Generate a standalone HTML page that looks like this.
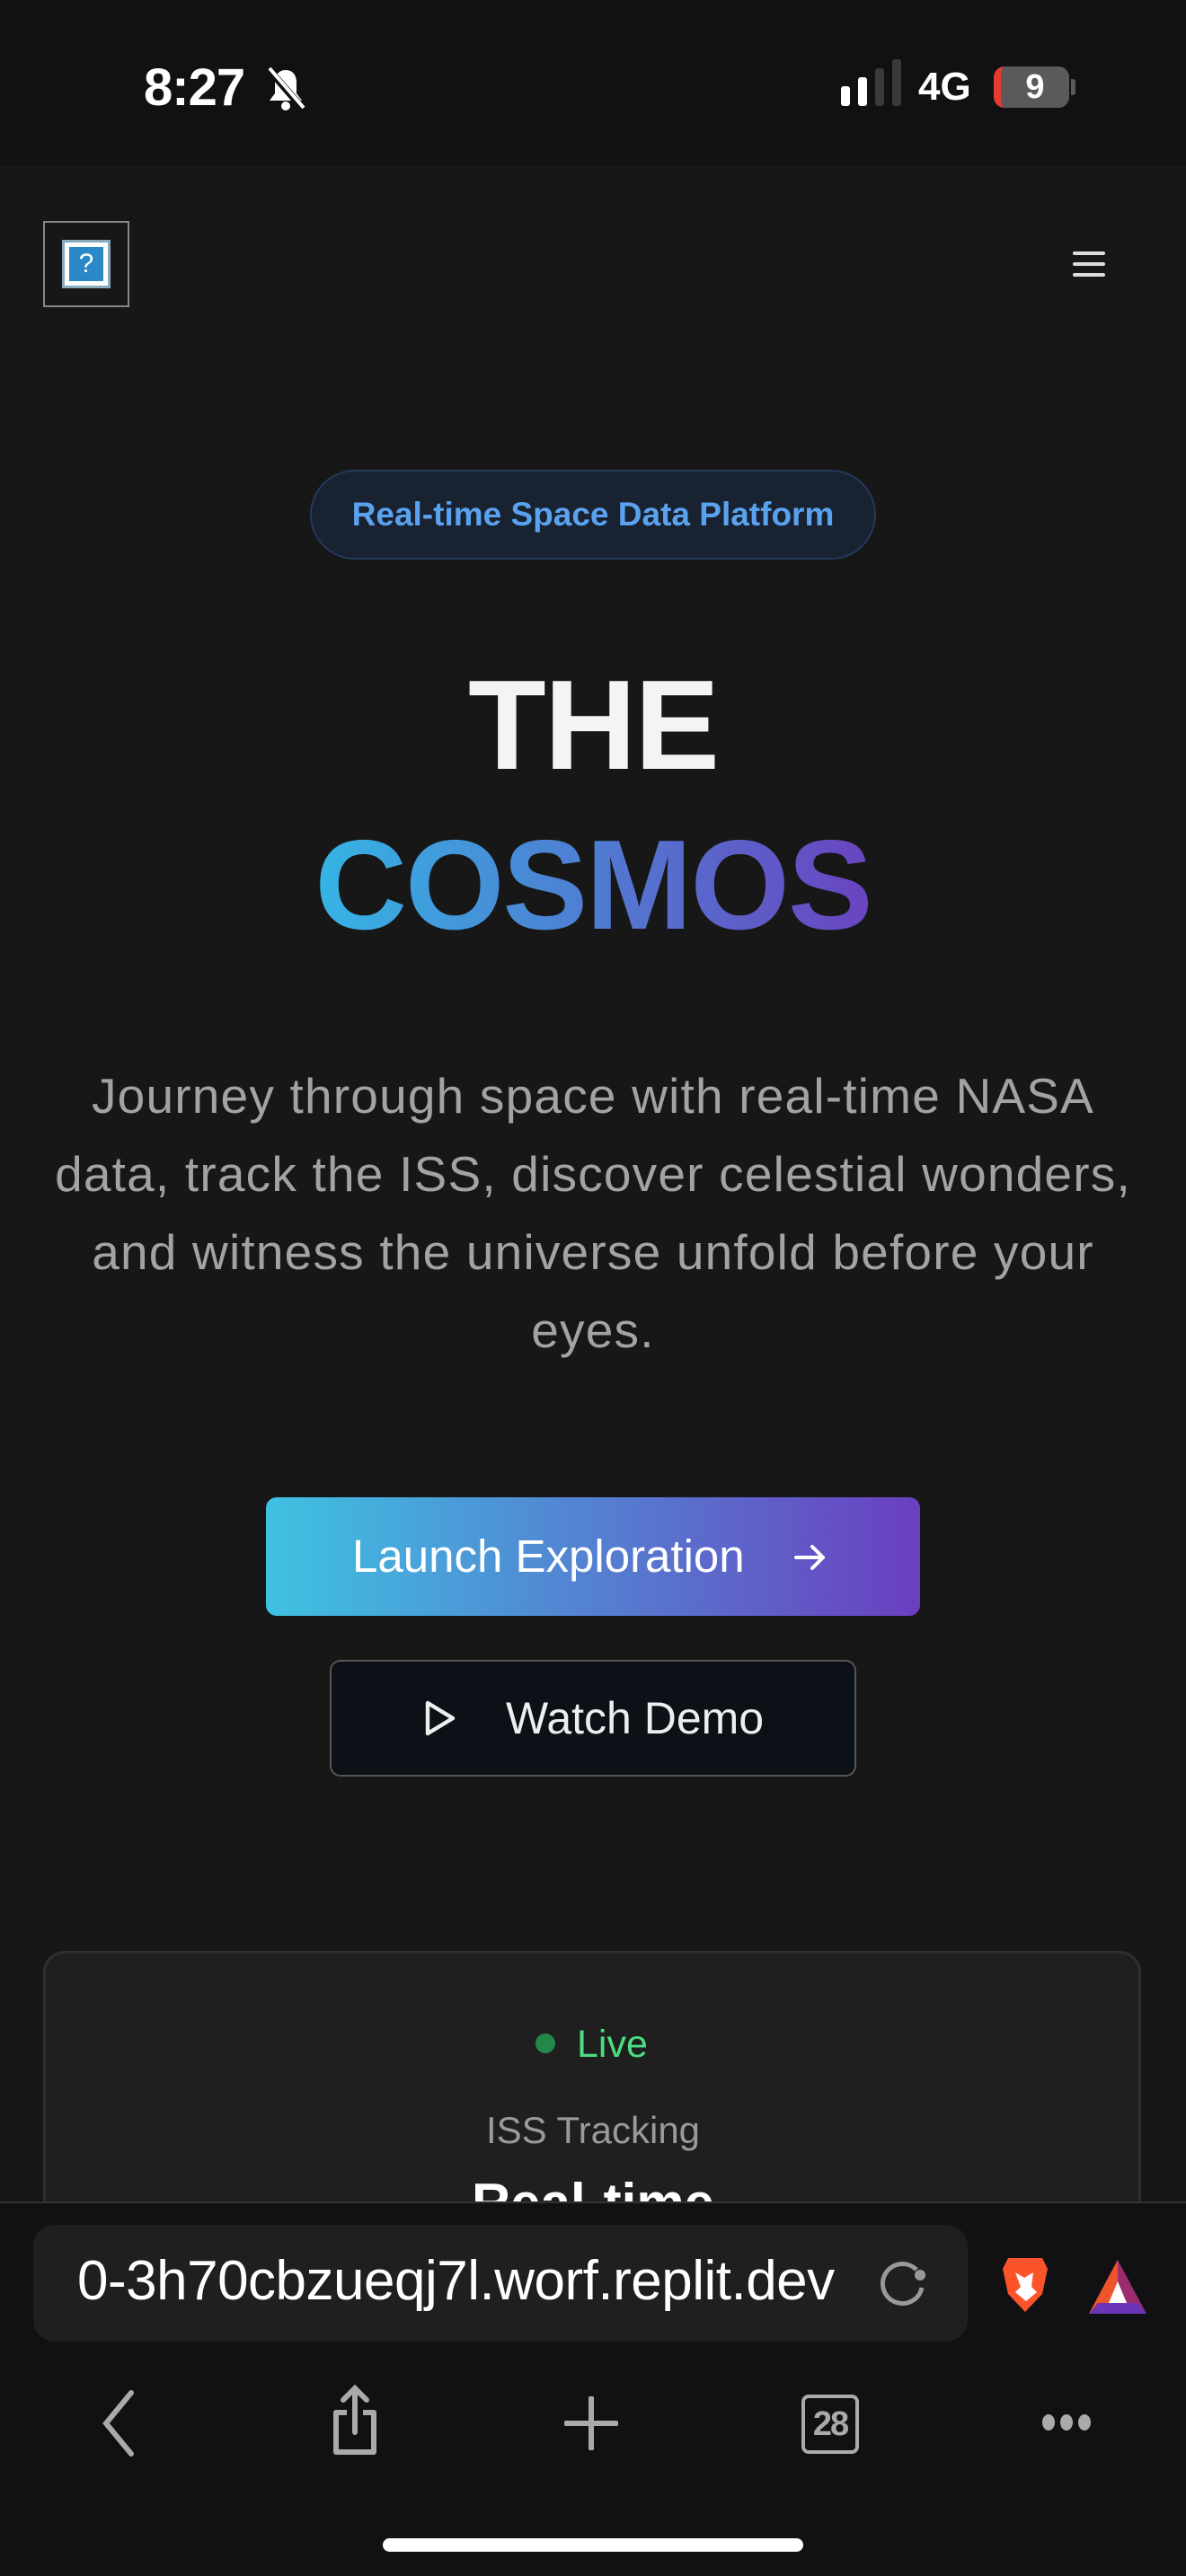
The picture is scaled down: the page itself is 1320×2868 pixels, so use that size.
<!DOCTYPE html>
<html><head><meta charset="utf-8"><style>
*{margin:0;padding:0;box-sizing:border-box}
body{width:1320px;height:2868px;background:#171717;font-family:"Liberation Sans",sans-serif;position:relative;overflow:hidden}
.abs{position:absolute}
</style></head><body>
<div class="abs" style="left:0;top:0;width:1320px;height:184px;background:#111113"></div>
<div class="abs" style="left:160px;top:64px;font-size:58px;font-weight:bold;color:#fff;letter-spacing:-1px">8:27</div>
<svg class="abs" style="left:292px;top:74px" width="52" height="50" viewBox="0 0 26 25"><path d="M13 2c-4 0-6 3-6 7v6l-3 4h18l-3-4V9c0-4-2-7-6-7z" fill="#fff"/><circle cx="13" cy="22" r="2.5" fill="#fff"/><path d="M3 1l20 23" stroke="#111113" stroke-width="4"/><path d="M4 1l19 22" stroke="#fff" stroke-width="2"/></svg>
<div class="abs" style="left:936px;top:96px;width:10px;height:22px;background:#fff;border-radius:3px"></div>
<div class="abs" style="left:955px;top:86px;width:10px;height:32px;background:#fff;border-radius:3px"></div>
<div class="abs" style="left:974px;top:76px;width:10px;height:42px;background:#3a3a3c;border-radius:3px"></div>
<div class="abs" style="left:993px;top:66px;width:10px;height:52px;background:#3a3a3c;border-radius:3px"></div>
<div class="abs" style="left:1022px;top:72px;font-size:44px;font-weight:bold;color:#fff">4G</div>
<div class="abs" style="left:1106px;top:74px;width:84px;height:46px;background:#5a5a5c;border-radius:12px;border-left:8px solid #e53b30;color:#fff;font-size:38px;font-weight:bold;text-align:center;line-height:46px">9</div>
<div class="abs" style="left:1192px;top:88px;width:5px;height:18px;background:#5a5a5c;border-radius:0 3px 3px 0"></div>

<div class="abs" style="left:48px;top:246px;width:96px;height:96px;border:2px solid #888"></div>
<div class="abs" style="left:72px;top:270px;width:48px;height:48px;background:#2a88c8;border:5px solid #fff;outline:3px solid #8ab;color:#fff;font-size:30px;text-align:center;line-height:38px">?</div>
<div class="abs" style="left:1194px;top:280px;width:36px;height:4px;background:#ddd;border-radius:2px"></div>
<div class="abs" style="left:1194px;top:292px;width:36px;height:4px;background:#ddd;border-radius:2px"></div>
<div class="abs" style="left:1194px;top:304px;width:36px;height:4px;background:#ddd;border-radius:2px"></div>

<div class="abs" style="left:345px;top:523px;width:630px;height:100px;border:2px solid #243a5c;background:#182230;border-radius:50px;color:#5aa2ef;font-size:37px;font-weight:600;text-align:center;line-height:96px">Real-time Space Data Platform</div>
<div class="abs" style="left:0;top:722px;width:1320px;text-align:center;font-size:142px;font-weight:bold;color:#f4f4f4;letter-spacing:-2px;line-height:172px">THE</div>
<div class="abs" style="left:0;top:900px;width:1320px;text-align:center;line-height:172px"><span style="font-size:142px;font-weight:bold;letter-spacing:-2px;background:linear-gradient(90deg,#35b4e4,#6a44c0);-webkit-background-clip:text;background-clip:text;color:transparent">COSMOS</span></div>
<div class="abs" style="left:0;top:1177px;width:1320px;text-align:center;font-size:55px;line-height:87px;color:#a3a3a3;white-space:nowrap;letter-spacing:1.2px">Journey through space with real-time NASA<br>data, track the ISS, discover celestial wonders,<br>and witness the universe unfold before your<br>eyes.</div>

<div class="abs" style="left:296px;top:1667px;width:728px;height:132px;border-radius:12px;background:linear-gradient(90deg,#3ec2e2,#6a3fc0);color:#fff;font-size:51px;line-height:132px;padding-left:96px">Launch Exploration</div>
<svg class="abs" style="left:884px;top:1718px" width="36" height="32" viewBox="0 0 18 16"><path d="M1 8h15M10 2l6 6-6 6" stroke="#fff" stroke-width="2" fill="none" stroke-linecap="round" stroke-linejoin="round"/></svg>
<div class="abs" style="left:367px;top:1848px;width:586px;height:130px;border-radius:12px;background:#0c1017;border:2px solid #555;color:#eee;font-size:50px;line-height:126px;padding-left:194px">Watch Demo</div>
<svg class="abs" style="left:472px;top:1892px" width="36" height="42" viewBox="0 0 18 21"><path d="M2 2l14 8.5L2 19z" stroke="#eee" stroke-width="2.2" fill="none" stroke-linejoin="round"/></svg>

<div class="abs" style="left:48px;top:2172px;width:1222px;height:400px;border:3px solid #2e2e2e;border-radius:24px;background:#1f1f20"></div>
<div class="abs" style="left:596px;top:2264px;width:22px;height:22px;border-radius:50%;background:#22884a"></div>
<div class="abs" style="left:642px;top:2252px;font-size:43px;color:#4ade80">Live</div>
<div class="abs" style="left:0;top:2348px;width:1320px;text-align:center;font-size:42px;color:#9a9a9a">ISS Tracking</div>
<div class="abs" style="left:0;top:2418px;width:1320px;text-align:center;font-size:60px;font-weight:bold;color:#fff">Real-time</div>

<div class="abs" style="left:0;top:2451px;width:1320px;height:417px;background:#111113;border-top:2px solid #333"></div>
<div class="abs" style="left:37px;top:2477px;width:1040px;height:130px;background:#1f1f21;border-radius:24px"></div>
<div class="abs" style="left:86px;top:2504px;font-size:62px;color:#fff;white-space:nowrap;letter-spacing:-0.5px">0-3h70cbzueqj7l.worf.replit.dev</div>
<svg class="abs" style="left:976px;top:2515px" width="60" height="56" viewBox="0 0 30 28"><path d="M22 6A11 11 0 1 0 25 16" stroke="#999" stroke-width="2.5" fill="none"/><circle cx="24" cy="9" r="3" fill="#999"/></svg>
<svg class="abs" style="left:1112px;top:2510px" width="58" height="66" viewBox="0 0 29 33"><path d="M5 2h19l3 6-3 14-9.5 10L5 22 2 8z" fill="#fb542b"/><path d="M9 10l5 3 5-3-1 8 3 3-6 5-6-5 3-3z" fill="#fff"/></svg>
<svg class="abs" style="left:1210px;top:2514px" width="68" height="64" viewBox="0 0 34 32"><path d="M17 1L1 31h32z" fill="#9b2c6e"/><path d="M17 1L1 31h16z" fill="#f0542b"/><path d="M1 31h32l-5-6H6z" fill="#6b35b8"/><path d="M17 13l-5 12h10z" fill="#fff"/></svg>

<svg class="abs" style="left:112px;top:2660px" width="40" height="76" viewBox="0 0 20 38"><path d="M17 2L3 19l14 17" stroke="#aaa" stroke-width="3" fill="none" stroke-linecap="round"/></svg>
<svg class="abs" style="left:366px;top:2654px" width="58" height="84" viewBox="0 0 29 42"><path d="M10 16H4v22h21V16h-6" stroke="#aaa" stroke-width="3" fill="none" stroke-linejoin="round"/><path d="M14.5 27V3M8 9l6.5-6.5L21 9" stroke="#aaa" stroke-width="3" fill="none" stroke-linecap="round"/></svg>
<svg class="abs" style="left:628px;top:2668px" width="60" height="60" viewBox="0 0 30 30"><path d="M15 1v28M1 15h28" stroke="#aaa" stroke-width="3" stroke-linecap="round"/></svg>
<div class="abs" style="left:892px;top:2666px;width:64px;height:66px;border:4px solid #aaa;border-radius:8px;color:#aaa;font-size:38px;font-weight:bold;text-align:center;line-height:58px;letter-spacing:-2px">28</div>
<div class="abs" style="left:1160px;top:2688px;width:14px;height:18px;border-radius:50%;background:#aaa"></div>
<div class="abs" style="left:1180px;top:2688px;width:14px;height:18px;border-radius:50%;background:#aaa"></div>
<div class="abs" style="left:1200px;top:2688px;width:14px;height:18px;border-radius:50%;background:#aaa"></div>
<div class="abs" style="left:426px;top:2826px;width:468px;height:15px;border-radius:8px;background:#fff"></div>
</body></html>
